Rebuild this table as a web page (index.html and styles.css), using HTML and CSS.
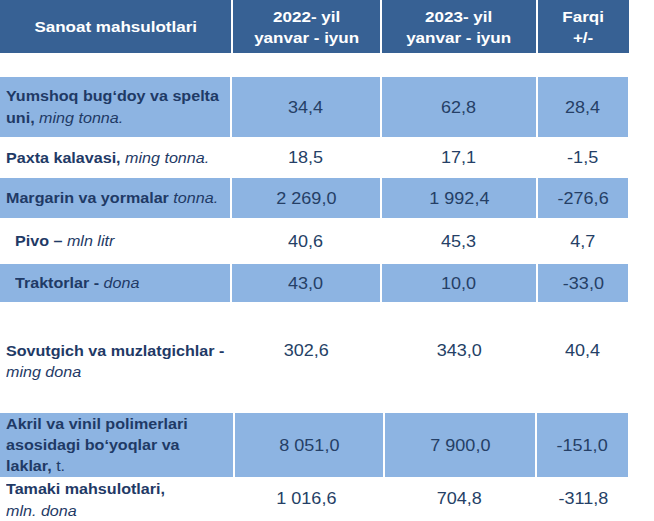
FILE: index.html
```html
<!DOCTYPE html>
<html lang="uz">
<head>
<meta charset="utf-8">
<title>Sanoat mahsulotlari</title>
<link rel="stylesheet" href="styles.css">
</head>
<body>
<div class="tbl">
  <div class="row hdr">
    <div class="cell ctr"><span class="tx">Sanoat mahsulotlari</span></div>
    <div class="cell ctr"><span class="tx">2022- yil<br>yanvar - iyun</span></div>
    <div class="cell ctr"><span class="tx">2023- yil<br>yanvar - iyun</span></div>
    <div class="cell ctr"><span class="tx">Farqi<br>+/-</span></div>
  </div>
  <div class="spacer"></div>

  <div class="row data blue r-yum">
    <div class="cell lbl"><span class="tx">Yumshoq bug‘doy va spelta<br>uni, <i>ming tonna.</i></span></div>
    <div class="cell num"><span class="tx">34,4</span></div>
    <div class="cell num"><span class="tx">62,8</span></div>
    <div class="cell num"><span class="tx">28,4</span></div>
  </div>

  <div class="row data r-pax">
    <div class="cell lbl"><span class="tx">Paxta kalavasi, <i>ming tonna.</i></span></div>
    <div class="cell num"><span class="tx">18,5</span></div>
    <div class="cell num"><span class="tx">17,1</span></div>
    <div class="cell num"><span class="tx">-1,5</span></div>
  </div>

  <div class="row data blue r-mar">
    <div class="cell lbl"><span class="tx">Margarin va yormalar <i>tonna.</i></span></div>
    <div class="cell num"><span class="tx">2 269,0</span></div>
    <div class="cell num"><span class="tx">1 992,4</span></div>
    <div class="cell num"><span class="tx">-276,6</span></div>
  </div>

  <div class="row data r-piv">
    <div class="cell lbl ind"><span class="tx">Pivo – <i>mln litr</i></span></div>
    <div class="cell num"><span class="tx">40,6</span></div>
    <div class="cell num"><span class="tx">45,3</span></div>
    <div class="cell num"><span class="tx">4,7</span></div>
  </div>

  <div class="row data blue r-tra">
    <div class="cell lbl ind"><span class="tx">Traktorlar - <i>dona</i></span></div>
    <div class="cell num"><span class="tx">43,0</span></div>
    <div class="cell num"><span class="tx">10,0</span></div>
    <div class="cell num"><span class="tx">-33,0</span></div>
  </div>

  <div class="row data top r-sov">
    <div class="cell lbl"><span class="tx">Sovutgich va muzlatgichlar -<br><i>ming dona</i></span></div>
    <div class="cell num"><span class="tx">302,6</span></div>
    <div class="cell num"><span class="tx">343,0</span></div>
    <div class="cell num"><span class="tx">40,4</span></div>
  </div>

  <div class="row data blue wide r-akr">
    <div class="cell lbl tight"><span class="tx">Akril va vinil polimerlari<br>asosidagi bo‘yoqlar va<br>laklar, <span class="unit">t.</span></span></div>
    <div class="cell num"><span class="tx">8 051,0</span></div>
    <div class="cell num"><span class="tx">7 900,0</span></div>
    <div class="cell num"><span class="tx">-151,0</span></div>
  </div>

  <div class="row data r-tam">
    <div class="cell lbl lbl-top"><span class="tx">Tamaki mahsulotlari,<br><i>mln. dona</i></span></div>
    <div class="cell num"><span class="tx">1 016,6</span></div>
    <div class="cell num"><span class="tx">704,8</span></div>
    <div class="cell num"><span class="tx">-311,8</span></div>
  </div>
</div>
</body>
</html>
```

FILE: styles.css
```css
html, body {
  margin: 0;
  padding: 0;
  background: #ffffff;
}

body {
  font-family: "Liberation Sans", Arial, sans-serif;
  color: #1f3a66;
}

.tbl {
  width: 654px;
}

.row {
  display: grid;
  column-gap: 2px;
}

.hdr {
  grid-template-columns: 231px 147px 154px 91px;
  height: 53px;
}

.hdr .cell {
  background: #376194;
  color: #ffffff;
  font-weight: bold;
  font-size: 14.8px;
  line-height: 21px;
  padding-top: 2px;
  box-sizing: border-box;
}

.spacer {
  height: 24px;
}

.data {
  grid-template-columns: 230px 148px 154px 90px;
}

.data.wide {
  grid-template-columns: 233px 148px 150px 91px;
}

.blue .cell {
  background: #8db4e2;
}

.cell {
  display: flex;
  align-items: center;
  min-width: 0;
}

.tx {
  display: inline-block;
  white-space: nowrap;
  transform: scaleX(1.15);
  transform-origin: left center;
}

.ctr {
  justify-content: center;
  text-align: center;
}

.ctr .tx {
  transform-origin: center center;
}

.lbl {
  padding-left: 6px;
  font-weight: bold;
  font-size: 14px;
  line-height: 22px;
  color: #1f3a66;
}

.lbl i {
  font-weight: normal;
  font-style: italic;
}

.lbl .unit {
  font-weight: normal;
}

.lbl.ind {
  padding-left: 15px;
}

.lbl.tight {
  line-height: 21px;
}

.num {
  justify-content: center;
  font-size: 17px;
  line-height: 21px;
  color: #253f66;
}

.num .tx {
  transform: scaleX(1.06);
  transform-origin: center center;
}

.r-yum { height: 60px; }
.r-pax { height: 41px; }
.r-mar { height: 40px; }
.r-piv { height: 46px; }
.r-tra { height: 38px; }
.r-sov { height: 111px; }
.r-akr { height: 64px; }
.r-tam { height: 48px; }

.top .cell {
  align-items: flex-start;
  padding-top: 38px;
}

.top .lbl {
  line-height: 21px;
  padding-top: 39px;
}

.lbl-top {
  align-items: flex-start;
  padding-top: 1px;
}

.r-tam .num {
  padding-bottom: 6px;
}
```
